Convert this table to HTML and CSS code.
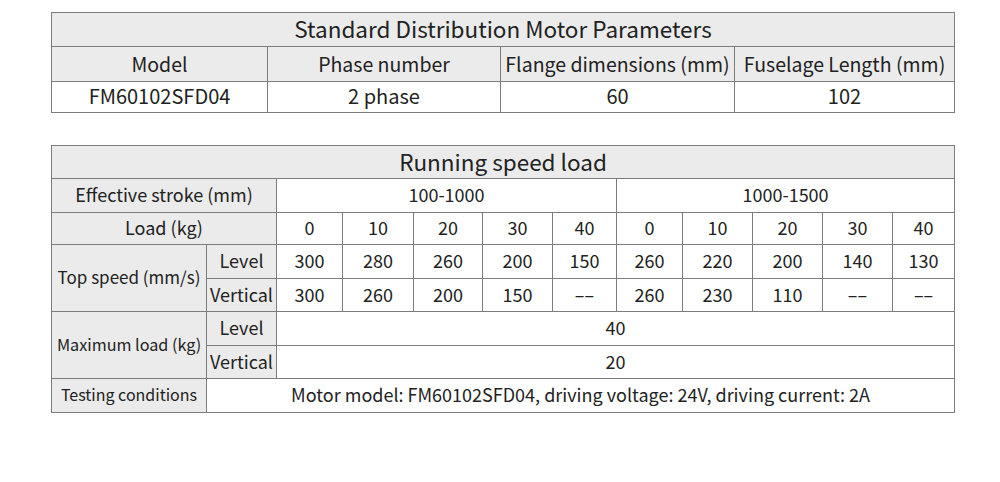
FILE: index.html
```html
<!DOCTYPE html>
<html>
<head>
<meta charset="utf-8">
<link rel="stylesheet" href="styles.css">
</head>
<body>
<div class="page">
  <table class="spec spec-std">
    <colgroup>
      <col class="c216"><col class="c233"><col class="c234"><col class="c220">
    </colgroup>
    <tr class="r-title"><td class="hd title" colspan="4">Standard Distribution Motor Parameters</td></tr>
    <tr class="r-head">
      <td class="hd">Model</td>
      <td class="hd">Phase number</td>
      <td class="hd">Flange dimensions (mm)</td>
      <td class="hd">Fuselage Length (mm)</td>
    </tr>
    <tr class="r-data">
      <td>FM60102SFD04</td>
      <td>2 phase</td>
      <td>60</td>
      <td>102</td>
    </tr>
  </table>

  <table class="spec spec-load">
    <colgroup>
      <col class="c155"><col class="c70">
      <col class="c66"><col class="c71"><col class="c69"><col class="c70"><col class="c64">
      <col class="c66"><col class="c70"><col class="c70"><col class="c70"><col class="c62">
    </colgroup>
    <tr class="r33"><td class="hd title" colspan="12">Running speed load</td></tr>
    <tr class="r34">
      <td class="hd" colspan="2">Effective stroke (mm)</td>
      <td colspan="5">100-1000</td>
      <td colspan="5">1000-1500</td>
    </tr>
    <tr class="r32">
      <td class="hd" colspan="2">Load (kg)</td>
      <td>0</td><td>10</td><td>20</td><td>30</td><td>40</td>
      <td>0</td><td>10</td><td>20</td><td>30</td><td>40</td>
    </tr>
    <tr class="r34">
      <td class="hd sm17" rowspan="2">Top speed (mm/s)</td>
      <td class="hd">Level</td>
      <td>300</td><td>280</td><td>260</td><td>200</td><td>150</td>
      <td>260</td><td>220</td><td>200</td><td>140</td><td>130</td>
    </tr>
    <tr class="r33">
      <td class="hd">Vertical</td>
      <td>300</td><td>260</td><td>200</td><td>150</td><td class="dash">––</td>
      <td>260</td><td>230</td><td>110</td><td class="dash">––</td><td class="dash">––</td>
    </tr>
    <tr class="r34">
      <td class="hd sm16" rowspan="2">Maximum load (kg)</td>
      <td class="hd">Level</td>
      <td colspan="10">40</td>
    </tr>
    <tr class="r33">
      <td class="hd">Vertical</td>
      <td colspan="10">20</td>
    </tr>
    <tr class="r34">
      <td class="hd sm15">Testing conditions</td>
      <td colspan="11">Motor model: FM60102SFD04, driving voltage: 24V, driving current: 2A</td>
    </tr>
  </table>
</div>
</body>
</html>
```

FILE: styles.css
```css
html, body {
  margin: 0;
  padding: 0;
  background: #ffffff;
}

body {
  font-family: "Noto Sans CJK SC", "Noto Sans", sans-serif;
  color: #222222;
}

.page {
  padding: 12px 0 0 51px;
  display: flex;
  flex-direction: column;
  gap: 32px;
}

.spec {
  border-collapse: collapse;
  table-layout: fixed;
  width: 904px;
}

.spec td {
  border: 1px solid #7d7d7d;
  padding: 0 0 3px 0;
  text-align: center;
  vertical-align: middle;
  font-size: 18px;
  line-height: 22px;
  white-space: nowrap;
  overflow: hidden;
}

.spec td.hd {
  background: #ebebeb;
}

.spec td.title {
  font-size: 22.5px;
}

.spec-std .r-head td { font-size: 19.5px; padding-bottom: 0; }
.spec-std .r-data td { font-size: 20px; padding-bottom: 2px; }

.spec td.sm17 { font-size: 17px; }
.spec td.sm16 { font-size: 16.2px; }
.spec td.sm15 { font-size: 16px; }

.c216 { width: 216px; }
.c233 { width: 233px; }
.c234 { width: 234px; }
.c220 { width: 220px; }

.c155 { width: 155px; }
.c70 { width: 70px; }
.c66 { width: 66px; }
.c71 { width: 71px; }
.c69 { width: 69px; }
.c64 { width: 64px; }
.c62 { width: 62px; }

.r-title td { height: 30px; }
.r-head td { height: 34px; }
.r-data td { height: 28px; }

.r32 td { height: 28px; }
.r33 td { height: 29px; }
.r34 td { height: 30px; }
```
